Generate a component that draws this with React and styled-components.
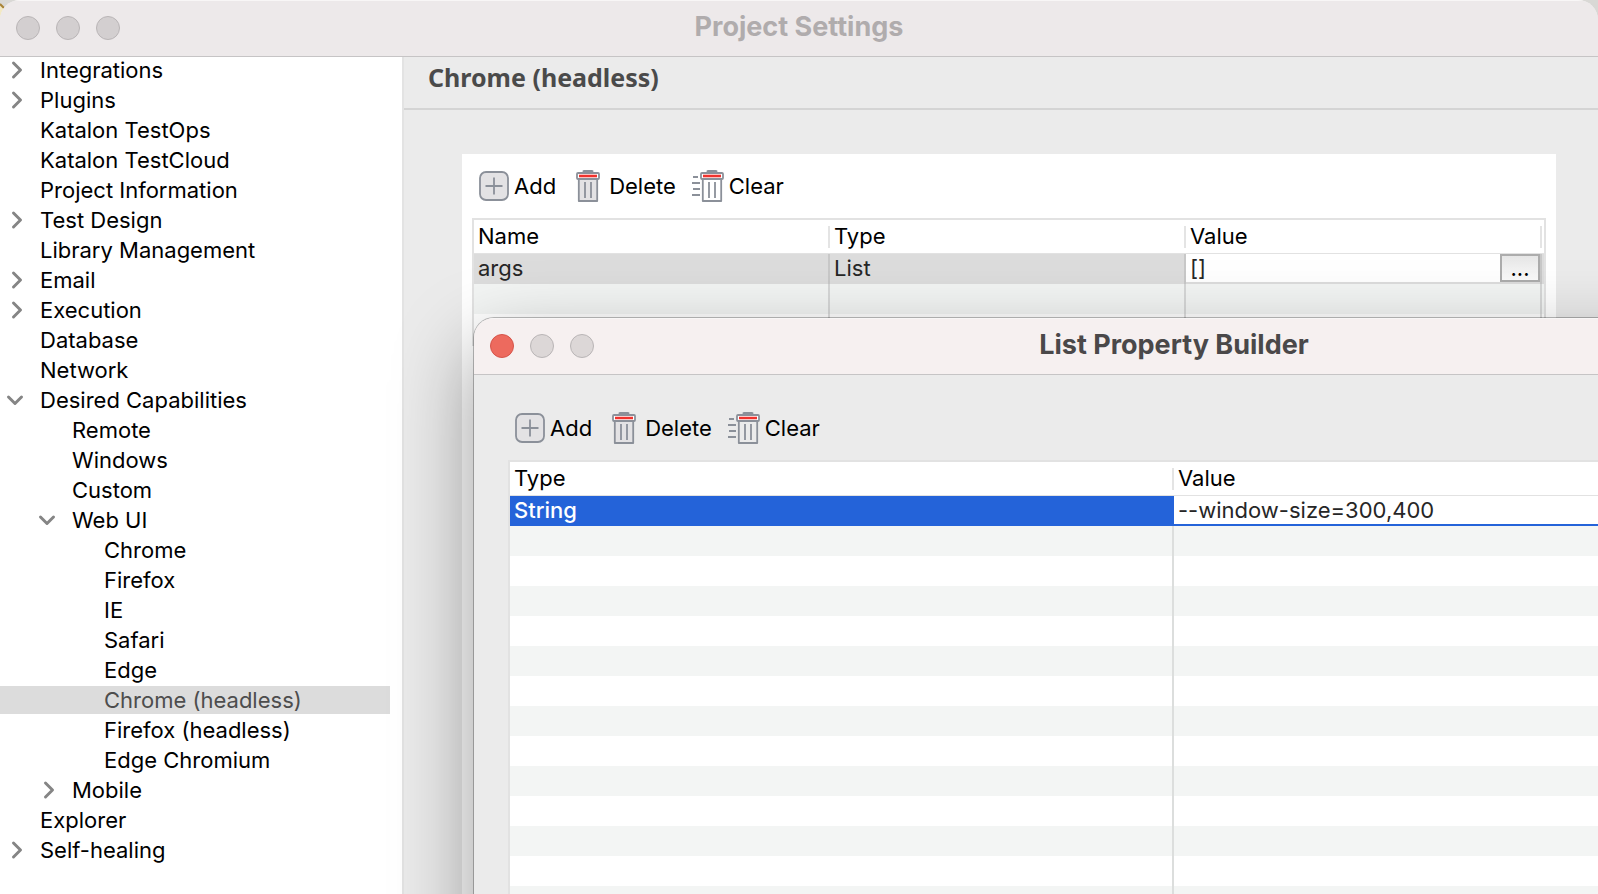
import React from "react";
import styled, { createGlobalStyle } from "styled-components";

const Global = createGlobalStyle`
  *, *::before, *::after { box-sizing: border-box; }
  body { margin: 0; background: #d9d8d5; overflow: hidden; }
  body, button, input { font-family: Inter, "Liberation Sans", sans-serif; font-size: 22px; line-height: 28px; color: #000; }
  button, input { margin: 0; padding: 0; border: 0; background: none; border-radius: 0; outline: none; }
`;

const Desktop = styled.div`
  position: relative;
  height: 100vh;
  overflow: hidden;
`;

const Fragment = styled.svg`
  position: absolute;
  left: 0;
  top: 0;
`;

const Window = styled.section`
  position: relative;
  height: 100%;
  display: flex;
  flex-direction: column;
  overflow: hidden;
  border-radius: 20px 20px 0 0;
  background: #ebebeb;
`;

const TitleBar = styled.header`
  position: relative;
  flex: none;
  height: 57px;
  display: grid;
  grid-template-columns: 1fr auto 1fr;
  align-items: center;
  padding: 0 16px;
  background: ${(p) => (p.$active ? "#f6f0f0" : "#ede9ea")};
  border-bottom: 1px solid #c6c4c5;
  box-shadow: inset 0 1px #f8f6f6;
`;

const Lights = styled.div`
  display: flex;
  gap: 16px;
`;

const Light = styled.button`
  width: 24px;
  height: 24px;
  border-radius: 50%;
  background: ${(p) => (p.$red ? "#ed6a5e" : p.$active ? "#dcd7d7" : "#d3cfd0")};
  border: 1px solid ${(p) => (p.$red ? "#d5544a" : "#b9b5b6")};
`;

const Title = styled.h1`
  margin: 0;
  padding-bottom: 2px;
  font-size: 27px;
  line-height: 32px;
  font-weight: 700;
  color: ${(p) => (p.$active ? "#4a4849" : "#b0acad")};
`;

const Body = styled.div`
  flex: 1;
  min-height: 0;
  display: flex;
`;

const Sidebar = styled.nav`
  flex: none;
  width: 404px;
  background: #fff;
  border-right: 2px solid #e3e3e3;
`;

const Tree = styled.ul`
  list-style: none;
  margin: -1px 0 0;
  padding: 0 12px 0 0;
`;

const TreeRow = styled.button`
  display: flex;
  align-items: center;
  width: 100%;
  height: 28px;
  margin-bottom: 2px;
  padding-left: ${(p) => p.$level * 32}px;
  text-align: left;
  white-space: nowrap;
  background: ${(p) => (p.$selected ? "#dcdcdc" : "transparent")};
  color: ${(p) => (p.$selected ? "#4d4d4d" : "#000")};
`;

const ChevronSlot = styled.span`
  flex: none;
  width: 40px;
  height: 28px;
  padding-left: 6px;
  display: flex;
  align-items: center;
`;

const Main = styled.main`
  flex: 1;
  min-width: 0;
  display: flex;
  flex-direction: column;
`;

const PageHeading = styled.h2`
  flex: none;
  margin: 0;
  height: 53px;
  padding: 4px 24px 0;
  font-family: "Noto Sans", "Open Sans", sans-serif;
  font-size: 25px;
  line-height: 32px;
  font-weight: 700;
  color: #4a4a4a;
  border-bottom: 2px solid #d4d4d4;
`;

const Panel = styled.div`
  flex: 1;
  margin: 44px 42px 0 58px;
  padding: 16px 10px 0;
  background: #fff;
`;

const Toolbar = styled.div`
  display: flex;
  gap: 16px;
  padding: 0 7px;
  margin-bottom: 16px;
`;

const ToolButton = styled.button`
  display: flex;
  align-items: center;
  gap: 5px;
  height: 32px;
`;

const Grid = styled.table`
  width: 100%;
  table-layout: fixed;
  border-collapse: separate;
  border-spacing: 0;
  border: 2px solid #e2e2e2;
  background: #fff;
`;

const HeadCell = styled.th`
  position: relative;
  height: 34px;
  padding: 0 4px 2px;
  text-align: left;
  font-weight: 400;
  border-bottom: 1px solid #e2e2e2;
  &:not(:last-child)::after {
    content: "";
    position: absolute;
    right: 0;
    top: 6px;
    width: 2px;
    height: 22px;
    background: #e4e4e4;
  }
`;

const rowColors = { muted: "#dcdcdc", active: "#2463d9", stripe: "#f3f5f4", plain: "#fff" };

const Row = styled.tr`
  background: ${(p) => rowColors[p.$tone]};
  color: ${(p) => (p.$tone === "active" ? "#fff" : "#262626")};
  font-weight: ${(p) => (p.$tone === "active" ? 500 : 400)};
`;

const Cell = styled.td`
  height: 30px;
  padding: 0 4px 2px;
  box-shadow: ${(p) => (p.$edge ? `inset -2px 0 ${p.$edge}` : "none")};
`;

const EditCell = styled.td`
  height: 30px;
  padding: 0 ${(p) => (p.$inset ? 2 : 0)}px 2px 0;
  box-shadow: ${(p) => (p.$inset ? "inset -2px 0 #c8c8c8" : "inset 0 -2px #2463d9")};
`;

const Editor = styled.div`
  display: flex;
  height: 28px;
  background: #fff;
`;

const TextField = styled.input`
  flex: 1;
  min-width: 0;
  padding: 0 4px;
  color: #262626;
`;

const MoreButton = styled.button`
  width: 40px;
  border: 2px solid #acacac;
  background: linear-gradient(#e6e6e6, #fafafa);
  line-height: 24px;
`;

const Dialog = styled.section`
  position: absolute;
  left: 474px;
  right: -276px;
  top: 318px;
  bottom: -120px;
  border-radius: 20px 20px 0 0;
  background: #ebebeb;
  box-shadow: 0 0 0 1px rgba(0, 0, 0, 0.26), 0 30px 80px rgba(0, 0, 0, 0.4);
  overflow: hidden;
`;

const DialogBody = styled.div`
  padding: 37px 34px 0;
`;

const stroke = "#8b9099";

function Chevron({ open }) {
  return (
    <svg width="20" height="20" viewBox="0 0 20 20" fill="none" stroke="#858585" strokeWidth="3" strokeLinecap="round" strokeLinejoin="round">
      <path d={open ? "M2.5 7 9 13.5 15.5 7" : "M7.5 3 14.5 10 7.5 17"} />
    </svg>
  );
}

function AddIcon() {
  return (
    <svg width="30" height="30" viewBox="0 0 30 30" fill="none" stroke={stroke} strokeWidth="1.8">
      <rect x="1" y="1" width="28" height="28" rx="6" fill="#e3e2e4" />
      <path d="M6.5 15H23.5M15 6.5V23.5" />
    </svg>
  );
}

function Bin({ x, fill }) {
  return (
    <g transform={`translate(${x} 0)`} stroke={stroke} strokeWidth="1.8" fill="none" strokeLinejoin="round">
      <path d="M7 2 8 1.2H16L17 2" strokeWidth="2.4" />
      <path d="M2.8 9V31H21.2V9" fill={fill} />
      <rect x="1" y="3" width="22" height="6" rx="1" fill="#fff" />
      <path d="M3 6H21" stroke="#f0322d" strokeWidth="2.6" />
      <path d="M9 12V28M15 12V28" />
    </g>
  );
}

function DeleteIcon() {
  return (
    <svg width="32" height="32" viewBox="0 0 32 32">
      <Bin x={4} fill="#e3e2e4" />
    </svg>
  );
}

function ClearIcon() {
  return (
    <svg width="32" height="32" viewBox="0 0 32 32">
      <path d="M1 7H6M0 13H8M1 19H8M0 25H8" stroke={stroke} strokeWidth="1.8" />
      <Bin x={8} fill="none" />
    </svg>
  );
}

function Tools() {
  return (
    <Toolbar>
      <ToolButton><AddIcon />Add</ToolButton>
      <ToolButton><DeleteIcon />Delete</ToolButton>
      <ToolButton><ClearIcon />Clear</ToolButton>
    </Toolbar>
  );
}

function WindowTitle({ active, children }) {
  return (
    <TitleBar $active={active}>
      <Lights>
        <Light aria-label="Close" $red={active} />
        <Light aria-label="Minimize" $active={active} />
        <Light aria-label="Zoom" $active={active} />
      </Lights>
      <Title $active={active}>{children}</Title>
    </TitleBar>
  );
}

const tree = [
  ["Integrations", 0, "closed"],
  ["Plugins", 0, "closed"],
  ["Katalon TestOps", 0],
  ["Katalon TestCloud", 0],
  ["Project Information", 0],
  ["Test Design", 0, "closed"],
  ["Library Management", 0],
  ["Email", 0, "closed"],
  ["Execution", 0, "closed"],
  ["Database", 0],
  ["Network", 0],
  ["Desired Capabilities", 0, "open"],
  ["Remote", 1],
  ["Windows", 1],
  ["Custom", 1],
  ["Web UI", 1, "open"],
  ["Chrome", 2],
  ["Firefox", 2],
  ["IE", 2],
  ["Safari", 2],
  ["Edge", 2],
  ["Chrome (headless)", 2],
  ["Firefox (headless)", 2],
  ["Edge Chromium", 2],
  ["Mobile", 1, "closed"],
  ["Explorer", 0],
  ["Self-healing", 0, "closed"],
];

const emptyRows = Array.from({ length: 16 }, (_, i) => i);

export default function App() {
  return (
    <Desktop>
      <Global />
      <Fragment width="8" height="20" viewBox="0 0 8 20">
        <path d="M0 6 4 9V14L0 18Z" fill="#f3e9c4" />
        <path d="M0 4 4 8" stroke="#a98335" strokeWidth="2" />
      </Fragment>
      <Window>
        <WindowTitle>Project Settings</WindowTitle>
        <Body>
          <Sidebar>
            <Tree>
              {tree.map(([label, level, state]) => (
                <li key={label}>
                  <TreeRow $level={level} $selected={label === "Chrome (headless)"}>
                    <ChevronSlot>{state && <Chevron open={state === "open"} />}</ChevronSlot>
                    {label}
                  </TreeRow>
                </li>
              ))}
            </Tree>
          </Sidebar>
          <Main>
            <PageHeading>Chrome (headless)</PageHeading>
            <Panel>
              <Tools />
              <Grid>
                <colgroup>
                  <col width="356" />
                  <col width="356" />
                  <col />
                  <col width="2" />
                </colgroup>
                <thead>
                  <tr>
                    <HeadCell>Name</HeadCell>
                    <HeadCell>Type</HeadCell>
                    <HeadCell>Value</HeadCell>
                    <HeadCell as="td" />
                  </tr>
                </thead>
                <tbody>
                  <Row $tone="muted">
                    <Cell $edge="#c8c8c8">args</Cell>
                    <Cell $edge="#c8c8c8">List</Cell>
                    <EditCell $inset>
                      <Editor>
                        <TextField aria-label="args value" defaultValue="[]" />
                        <MoreButton>...</MoreButton>
                      </Editor>
                    </EditCell>
                    <td />
                  </Row>
                  <Row $tone="stripe">
                    <Cell $edge="#d6d7d7" />
                    <Cell $edge="#d6d7d7" />
                    <Cell $edge="#d6d7d7" />
                    <td />
                  </Row>
                  <Row $tone="plain">
                    <Cell $edge="#dedede" />
                    <Cell $edge="#dedede" />
                    <Cell $edge="#dedede" />
                    <td />
                  </Row>
                </tbody>
              </Grid>
            </Panel>
          </Main>
        </Body>
      </Window>
      <Dialog role="dialog" aria-label="List Property Builder">
        <WindowTitle active>List Property Builder</WindowTitle>
        <DialogBody>
          <Tools />
          <Grid>
            <thead>
              <tr>
                <HeadCell>Type</HeadCell>
                <HeadCell>Value</HeadCell>
              </tr>
            </thead>
            <tbody>
              <Row $tone="active">
                <Cell>String</Cell>
                <EditCell>
                  <Editor>
                    <TextField aria-label="String value" defaultValue="--window-size=300,400" />
                  </Editor>
                </EditCell>
              </Row>
              {emptyRows.map((i) => (
                <Row key={i} $tone={i % 2 ? "plain" : "stripe"}>
                  <Cell $edge="#dcdedd" />
                  <Cell />
                </Row>
              ))}
            </tbody>
          </Grid>
        </DialogBody>
      </Dialog>
    </Desktop>
  );
}
